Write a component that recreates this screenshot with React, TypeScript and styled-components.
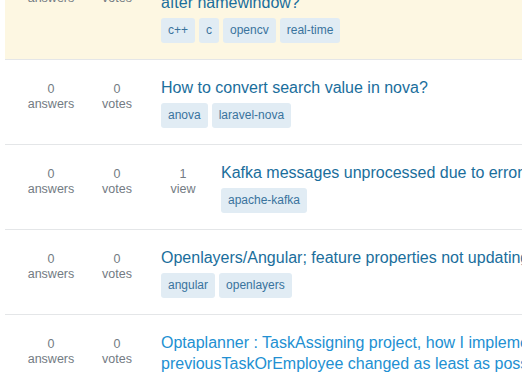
import React from 'react';
import styled, { createGlobalStyle } from 'styled-components';

type TQuestion = {
  title: string;
  tags: string[];
  answers: number;
  votes: number;
  views?: number;
  highlighted?: boolean;
  fresh?: boolean;
};

const questions: TQuestion[] = [
  {
    title: 'How to show the camera stream with OpenCV in real-time after namewindow?',
    tags: ['c++', 'c', 'opencv', 'real-time'],
    answers: 0,
    votes: 0,
    highlighted: true,
  },
  {
    title: 'How to convert search value in nova?',
    tags: ['anova', 'laravel-nova'],
    answers: 0,
    votes: 0,
  },
  {
    title: 'Kafka messages unprocessed due to errors',
    tags: ['apache-kafka'],
    answers: 0,
    votes: 0,
    views: 1,
  },
  {
    title: 'Openlayers/Angular; feature properties not updating',
    tags: ['angular', 'openlayers'],
    answers: 0,
    votes: 0,
  },
  {
    title: 'Optaplanner : TaskAssigning project, how I implement previousTaskOrEmployee changed as least as possible?',
    tags: ['java', 'optaplanner'],
    answers: 0,
    votes: 0,
    fresh: true,
  },
];

const plural = (n: number, word: string) => (n === 1 ? word : `${word}s`);

export default function App() {
  return (
    <>
      <GlobalStyle />
      <QuestionList>
        {questions.map((q) => (
          <Summary key={q.title} $highlighted={q.highlighted}>
            <Stat>
              <Count>{q.answers}</Count>
              <Label>{plural(q.answers, 'answer')}</Label>
            </Stat>
            <Stat $tight={q.views === undefined}>
              <Count>{q.votes}</Count>
              <Label>{plural(q.votes, 'vote')}</Label>
            </Stat>
            {q.views !== undefined && (
              <Stat $tight>
                <Count>{q.views}</Count>
                <Label>{plural(q.views, 'view')}</Label>
              </Stat>
            )}
            <Body $afterViews={q.views !== undefined}>
              <Title $fresh={q.fresh}>{q.title}</Title>
              <Tags>
                {q.tags.map((tag) => (
                  <Tag key={tag}>{tag}</Tag>
                ))}
              </Tags>
            </Body>
          </Summary>
        ))}
      </QuestionList>
    </>
  );
}

const GlobalStyle = createGlobalStyle`
  html, body {
    margin: 0;
    padding: 0;
    background: #fff;
    overflow: hidden;
  }
  body {
    font-family: "Liberation Sans", Arial, sans-serif;
  }
`;

const QuestionList = styled.div`
  width: 604px;
  margin: -46px 0 0 5px;
`;

const Summary = styled.div<{ $highlighted?: boolean }>`
  display: flex;
  align-items: flex-start;
  padding: 17px 8px 16px 17px;
  border-bottom: 1px solid #e4e6e8;
  background: ${(p) => (p.$highlighted ? '#fdf7e2' : '#fff')};
`;

const Stat = styled.div<{ $tight?: boolean }>`
  flex: none;
  width: 58px;
  margin-right: ${(p) => (p.$tight ? '2px' : '8px')};
  margin-top: 5px;
  text-align: center;
  color: #737b83;
  font-size: 12.5px;
  line-height: 15px;
`;

const Count = styled.div``;

const Label = styled.div``;

const Body = styled.div<{ $afterViews?: boolean }>`
  flex: 1;
  min-width: 0;
  margin-left: ${(p) => (p.$afterViews ? '7px' : '13px')};
`;

const Title = styled.h3<{ $fresh?: boolean }>`
  margin: 0 0 5px;
  font-size: 16px;
  font-weight: normal;
  line-height: 21px;
  color: ${(p) => (p.$fresh ? '#2290d2' : '#1a6e9c')};
`;

const Tags = styled.div`
  display: flex;
  gap: 4px;
`;

const Tag = styled.span`
  font-size: 12px;
  line-height: 15px;
  padding: 5px 7px;
  border-radius: 3px;
  color: #39739d;
  background: #e1ecf4;
`;
